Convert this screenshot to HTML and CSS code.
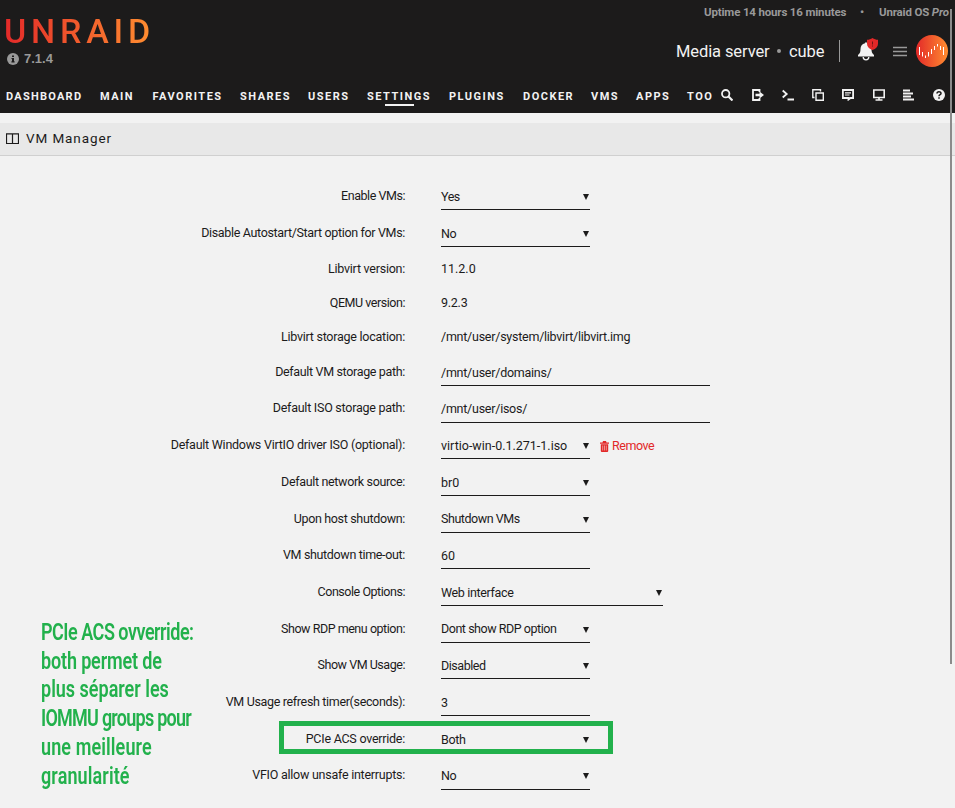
FILE: index.html
```html
<!DOCTYPE html>
<html lang="en">
<head>
<meta charset="utf-8">
<title>VM Manager</title>
<link rel="stylesheet" href="styles.css">
</head>
<body>
<header class="header">
  <div class="top">
    <div class="brand">
      <div class="logo">UNRAID</div>
      <div class="version"><svg width="12" height="12" viewBox="0 0 12 12"><circle cx="6" cy="6" r="6" fill="#999"/><path d="M5 2.500h2v1.600H5zM4.500 5H7v3.200h.6v1.200H4.400V8.200H5V6.100h-.5z" fill="#1c1b1b"/></svg><span>7.1.4</span></div>
    </div>
    <div class="server">
      <div class="uptime"><span class="up">Uptime 14 hours 16 minutes</span><span class="dot">•</span><span class="os">Unraid OS <i>Pro</i></span></div>
      <div class="identity">
        <span class="name">Media server</span><span class="sep"></span><span class="host">cube</span><span class="bar"></span>
        <svg class="bell" width="22" height="24" viewBox="0 0 22 24"><path d="M8 5.200V4.400h2v.8c3 .5 4.500 2.800 4.500 5.800 0 3 .5 4.500 2.500 6V18.500H1V17c2-1.500 2.500-3 2.500-6 0-3 1.500-5.300 4.500-5.800z" fill="#f2f2f2"/><path d="M6.200 19a2.800 2.800 0 0 0 5.600 0" fill="none" stroke="#f2f2f2" stroke-width="1.300"/><path d="M15.500 0c1.700 1.200 3.500 1.700 5.500 1.800v4c0 3-2 5-5.500 6.200C12 10.800 10 8.800 10 5.800v-4C12 1.700 13.800 1.200 15.500 0z" fill="#e22828"/><path d="M15.500 3.500v3M15.500 7.500v1" stroke="#721515"/></svg>
        <svg class="burger" width="14" height="11" viewBox="0 0 14 11"><path d="M0 1.500h14M0 5.500h14M0 9.500h14" stroke="#999" stroke-width="1.400"/></svg>
        <svg class="avatar" width="32" height="32" viewBox="0 0 32 32"><defs><linearGradient id="g"><stop stop-color="#e32929"/><stop offset="1" stop-color="#ff8d30"/></linearGradient></defs><circle cx="16" cy="16" r="16" fill="url(#g)"/><path d="M3.500 12v8M6.500 17v4.500M9.500 20.500v2.500M12.500 17v4.500M15.500 14v5M18.500 11v4M21.500 9v2.500M24.500 11v4M27.500 12v8" stroke="#fff"/></svg>
      </div>
    </div>
  </div>
  <div class="menu">
    <nav class="nav"><span class="first">DASHBOARD</span><span>MAIN</span><span>FAVORITES</span><span>SHARES</span><span>USERS</span><span class="active">SETTINGS</span><span>PLUGINS</span><span>DOCKER</span><span>VMS</span><span>APPS</span><span>TOO</span></nav>
    <div class="tools">
      <svg viewBox="0 0 12 12"><circle cx="4.700" cy="4.700" r="3.700"/><path d="M7.500 7.500l4 4" stroke-width="2.200"/></svg>
      <svg viewBox="0 0 12 12"><path d="M7.500 3V1H1v10h6.500V9"/><path d="M3.500 4.800H7.500V2.500L12 6 7.500 9.500V7.200H3.500z" class="fill"/></svg>
      <svg viewBox="0 0 12 12"><path d="M.7 1.500L4.700 5 .7 8.500M5.500 10.500H12"/></svg>
      <svg viewBox="0 0 12 12"><path d="M4 4h7.300v7.300H4zM2.500 8.500H.8V.8h7.700v1.700" stroke-width="1.400"/></svg>
      <svg viewBox="0 0 12 12"><path d="M.9 1h10.200v8H8.500L6.500 10.500V9H.9z"/><path d="M3 3.800h6M3 6h4.500" stroke-width="1.200"/></svg>
      <svg viewBox="0 0 12 12"><path d="M.8 1h10.400v7.500H.8zM6 8.500V11M2.500 11h7" stroke-width="1.600"/></svg>
      <svg viewBox="0 0 12 12"><path d="M0 1.500h7M0 4.500h10M0 7.500h8M0 10.500h11" stroke-width="2.100"/></svg>
      <svg viewBox="0 0 12 12"><circle cx="6" cy="6" r="6" class="fill"/><path d="M4 4.600c0-2.400 4-2.400 4-.1C8 5.800 6 5.700 6 7.300M6 8.300v1.400" class="dark"/></svg>
    </div>
  </div>
</header>
<div class="title"><svg width="13" height="11" viewBox="0 0 13 11"><path d="M.5 1h12v9.500H.5zM0 .8h13M6.500 1v9" fill="none" stroke="#1c1b1b" stroke-width="1.200"/></svg><span>VM Manager</span></div>
<main class="form">
  <div class="row"><label class="c">Enable VMs:</label><div class="field select c">Yes</div></div>
  <div class="row"><label class="b">Disable Autostart/Start option for VMs:</label><div class="field select c">No</div></div>
  <div class="row text"><label class="a">Libvirt version:</label><div>11.2.0</div></div>
  <div class="row text"><label class="c">QEMU version:</label><div class="a">9.2.3</div></div>
  <div class="row text"><label class="a">Libvirt storage location:</label><div class="a">/mnt/user/system/libvirt/libvirt.img</div></div>
  <div class="row"><label class="b">Default VM storage path:</label><div class="field wide a">/mnt/user/domains/</div></div>
  <div class="row"><label class="a">Default ISO storage path:</label><div class="field wide a">/mnt/user/isos/</div></div>
  <div class="row"><label class="a">Default Windows VirtIO driver ISO (optional):</label><div class="field select">virtio-win-0.1.271-1.iso</div><a class="remove"><svg width="9" height="11" viewBox="0 0 9 11"><path d="M0 1.500h2.500L3 0h3l.5 1.500H9v1.200H0zM.8 3.200h7.400V10q0 1-1 1H1.800q-1 0-1-1z" fill="#e22828"/><path d="M2.700 4.500v5M4.500 4.500v5M6.300 4.500v5" stroke="#f2c0c0" stroke-width=".7"/></svg><span class="c">Remove</span></a></div>
  <div class="row"><label class="b">Default network source:</label><div class="field select">br0</div></div>
  <div class="row"><label class="b">Upon host shutdown:</label><div class="field select c">Shutdown VMs</div></div>
  <div class="row"><label class="b">VM shutdown time-out:</label><div class="field">60</div></div>
  <div class="row"><label class="c">Console Options:</label><div class="field select mid b">Web interface</div></div>
  <div class="row"><label class="c">Show RDP menu option:</label><div class="field select c">Dont show RDP option</div></div>
  <div class="row"><label class="c">Show VM Usage:</label><div class="field select c">Disabled</div></div>
  <div class="row"><label class="b">VM Usage refresh timer(seconds):</label><div class="field">3</div></div>
  <div class="row"><label class="a">PCIe ACS override:</label><div class="field select b">Both</div></div>
  <div class="row"><label class="a">VFIO allow unsafe interrupts:</label><div class="field select c">No</div></div>
</main>
<div class="highlight"></div>
<p class="note"><span class="tight">PCIe ACS ovverride:</span><br>both permet de<br><span class="mild">plus séparer les</span><br><span class="tighter">IOMMU groups pour</span><br><span class="loose">une meilleure</span><br><span class="loose">granularité</span></p>
<div class="scrollbar"></div>
</body>
</html>
```
FILE: styles.css
```css
* { box-sizing: border-box; }
body { margin: 0; height: 808px; overflow: hidden; position: relative; background: #f2f2f2; color: #1c1b1b; font: 12.5px/18px Roboto, "Noto Sans", sans-serif; }
svg { display: block; flex: none; }
.a { letter-spacing: -.25px; }
.b { letter-spacing: -.34px; }
.c { letter-spacing: -.46px; }
.header { height: 113px; background: #1c1b1b; color: #f2f2f2; }
.top { height: 78px; display: flex; justify-content: space-between; }
.brand { padding: 14px 0 0 4px; }
.logo { width: 147px; height: 35px; font-size: 34px; line-height: 34px; font-weight: 500; letter-spacing: 4.800px; background: linear-gradient(90deg, #e32929, #ff8d30); -webkit-background-clip: text; background-clip: text; color: transparent; }
.version { display: flex; align-items: center; gap: 5px; margin: 0 0 0 3px; color: #999; font: bold 13px/18px "Liberation Sans", sans-serif; }
.version span { padding-top: 1px; }
.server { width: 279px; }
.uptime { display: flex; padding: 3px 0 0 28px; color: #999; font-size: 11.5px; font-weight: 700; letter-spacing: -.16px; white-space: nowrap; }
.up { width: 156px; }
.dot { width: 19px; }
.identity { display: flex; align-items: center; height: 32px; margin-top: 14px; font-size: 16.500px; letter-spacing: -.1px; white-space: nowrap; }
.name { width: 101px; padding-top: 2px; }
.sep { width: 4px; height: 4px; margin-right: 8px; border-radius: 50%; background: #999; }
.host { width: 50px; padding-top: 2px; }
.bar { width: 1px; height: 22px; background: #999; }
.bell { margin: -3px 0 0 17px; }
.burger { margin-left: 14px; }
.avatar { margin-left: 9px; }
.menu { height: 35px; display: flex; }
.nav { width: 721px; padding: 10px 0 0 6px; display: grid; grid-template-columns: 94px 52.500px 87.500px 68px 59px 82px 74px 68px 45px 51px 25px; font-size: 11px; font-weight: 700; letter-spacing: 1.500px; }
.first { letter-spacing: 1.250px; }
.active::after { content: ""; display: block; width: 29px; height: 2px; margin: -2px 0 0 18px; background: #f2f2f2; }
.tools { display: flex; gap: 18.300px; margin-left: .3px; padding-top: 11px; }
.tools svg { width: 12px; height: 12px; fill: none; stroke: #f2f2f2; stroke-width: 1.800; }
.tools .fill { fill: #f2f2f2; stroke: none; }
.tools .dark { stroke: #1c1b1b; stroke-width: 1.500; }
.title { margin-top: 10px; height: 33px; display: flex; align-items: center; gap: 7px; padding: 0 0 2px 6px; background: #e8e8e8; border-bottom: 1px solid #d0d0d0; font-size: 13.500px; letter-spacing: .9px; }
.form { padding-top: 17.600px; }
.row { height: 36.700px; display: grid; grid-template-columns: 405px auto auto; column-gap: 36px; justify-content: start; }
.row label { text-align: right; padding-top: 13.500px; }
.row.text { height: 34.100px; }
.row.text label, .row.text div { padding-top: 12.600px; }
.field { width: 149px; padding-top: 14.400px; border-bottom: 1px solid #1c1b1b; position: relative; white-space: nowrap; }
.field.wide { width: 269px; }
.field.mid { width: 222px; }
.select::after { content: ""; position: absolute; right: 1px; top: 20.600px; border: 3px solid transparent; border-top: 6px solid #1c1b1b; border-bottom: 0; }
.remove { display: flex; align-items: center; gap: 3px; margin-left: -26px; padding-top: 11px; color: #e22828; }
.highlight { position: absolute; left: 279px; top: 721px; width: 334px; height: 33px; border: 5px solid #22b14c; }
.row:nth-last-child(2) .field { border-bottom-color: transparent; }
.note { position: absolute; left: 41px; top: 618px; margin: 0; color: #22b14c; font-size: 24px; line-height: 28.700px; font-weight: 600; letter-spacing: -.2px; white-space: nowrap; transform: scaleX(.75); transform-origin: left; }
.tight { letter-spacing: -.65px; }
.tighter { letter-spacing: -1px; }
.mild { letter-spacing: 0; }
.loose { letter-spacing: .15px; }
.scrollbar { position: absolute; left: 950px; top: 9px; width: 2px; height: 655px; background: #8b8b8b; }
```
